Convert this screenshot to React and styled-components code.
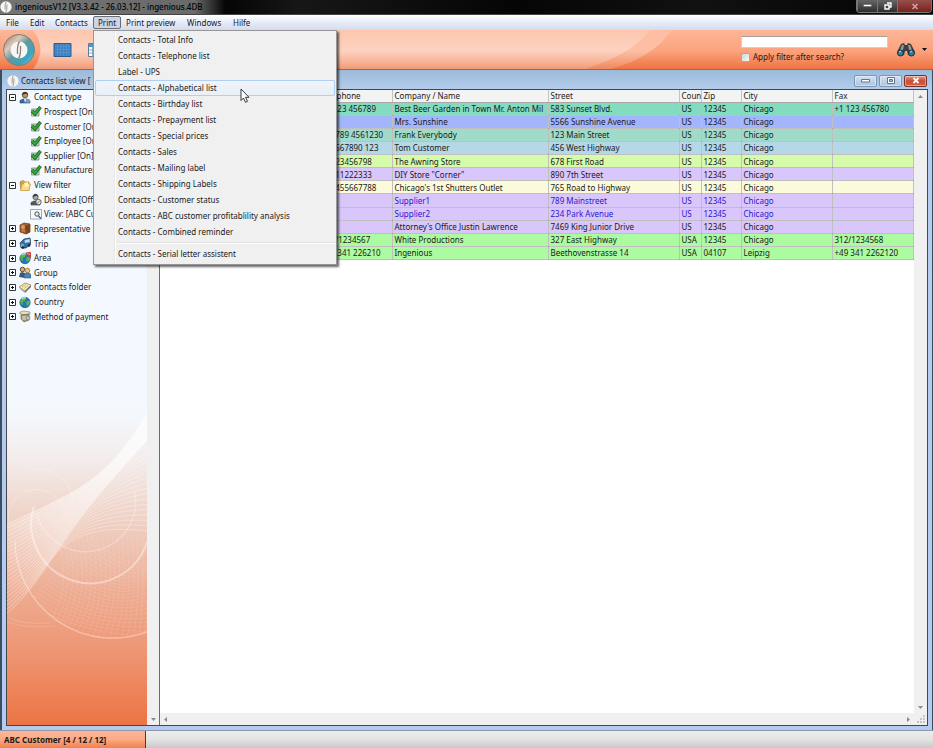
import React from 'react';
import styled, { createGlobalStyle } from 'styled-components';

const GlobalStyle = createGlobalStyle`
  * {
    box-sizing: border-box;
  }

  body {
    margin: 0;
    color: #1a1a1a;
    font: 8px/12px 'Noto Sans', 'Open Sans', sans-serif;
  }

  button, input {
    margin: 0;
    padding: 0;
    color: inherit;
    font: inherit;
  }

  ul {
    margin: 0;
    padding: 0;
    list-style: none;
  }
`;

const Page = styled.div`
  min-height: 100vh;
  display: flex;
  flex-direction: column;
  background-color: #a9c4e4;
`;

const TitleBar = styled.header`
  height: 15px;
  display: flex;
  align-items: center;
  gap: 3px;
  background: linear-gradient(90deg, #747474 0, #6a6a6a 195px, #060606 225px, #060606 230px, #171717 300px, #050505 55%, #111 75%, #030303);
  border-bottom: 1px solid #444;
`;

const AppTitle = styled.h1`
  flex: 1;
  margin: 0;
  color: #000;
  font-size: 8px;
  font-weight: 500;
`;

const WindowButtons = styled.div`
  align-self: flex-start;
  display: flex;
  margin-right: 1px;
  border: 1px solid #777;
  border-top: 0;
  border-radius: 0 0 4px 4px;
  overflow: hidden;
`;

const WindowButton = styled.button`
  width: ${(p) => (p.$close ? '34px' : '20px')};
  height: 12px;
  display: flex;
  align-items: center;
  justify-content: center;
  border: 0;
  border-left: 1px solid #777;
  background: ${(p) => (p.$close ? 'linear-gradient(#96504b, #7b211b)' : 'linear-gradient(#666, #2d2d2d)')};
`;

const MenuBar = styled.nav`
  position: relative;
  z-index: 2;
  height: 15px;
  display: flex;
  align-items: center;
  padding-left: 1px;
  background: linear-gradient(#fff, #e8edf8 45%, #d4dbee);
`;

const MenuButton = styled.button`
  height: 13px;
  padding: 0 4px;
  border: 1px solid ${(p) => (p.$open ? '#6a6d75' : 'transparent')};
  border-radius: 2px;
  background: ${(p) => (p.$open ? '#cfd4e2' : 'none')};
  line-height: 10px;
  white-space: nowrap;
`;

const MenuItemHolder = styled.div`
  position: relative;
  flex: 0 0 ${(p) => p.$width}px;
  display: flex;
`;

const DropDown = styled.div`
  position: absolute;
  top: 14px;
  left: 0;
  width: 244px;
  padding: 1px 1px 2px;
  border: 1px solid #979797;
  background:
    linear-gradient(90deg, transparent 20px, #e6e7e7 20px, #e6e7e7 21px, #fff 21px, #fff 22px, transparent 22px),
    #f0f0f0;
  box-shadow: 2px 2px 2px #0009;
`;

const DropItem = styled.button`
  width: 100%;
  height: 16px;
  display: block;
  padding: 0 0 0 22px;
  border: 1px solid ${(p) => (p.$active ? '#aecff7' : 'transparent')};
  border-radius: 2px;
  background: ${(p) => (p.$active ? 'linear-gradient(#f2f6fbcc, #e6eff9cc)' : 'none')};
  line-height: 14px;
  text-align: left;
`;

const DropRule = styled.hr`
  height: 2px;
  margin: 2px 0 2px 22px;
  border: 0;
  border-top: 1px solid #e0e0e0;
  background-color: #fff;
`;

const Pointer = styled.svg`
  position: absolute;
  top: 57px;
  left: 146px;
  width: 10px;
  height: 15px;
`;

const ToolBar = styled.div`
  position: relative;
  height: 40px;
  display: flex;
  align-items: center;
  background: linear-gradient(#fdb697, #fba27c 55%, #ee7341);
  border-bottom: 1px solid #8d6d63;
`;

const Sweep = styled.svg`
  position: absolute;
  top: 0;
  left: 0;
  width: 100%;
  height: 100%;
`;

const Tools = styled.div`
  position: relative;
  flex: 1;
  display: flex;
  align-items: center;
  gap: 12px;
  padding-left: 2px;
`;

const ToolButton = styled.button`
  height: 34px;
  display: flex;
  align-items: center;
  border: 0;
  background: none;
`;

const Search = styled.form`
  position: relative;
  width: 147px;
  display: flex;
  flex-direction: column;
  gap: 3px;
`;

const SearchInput = styled.input`
  width: 100%;
  height: 12px;
  padding: 0 2px;
  border: 1px solid #e3c9bd;
  border-top-color: #a5a09e;
  background-color: #fff;
`;

const CheckLabel = styled.label`
  display: flex;
  align-items: center;
  gap: 3px;
  white-space: nowrap;
`;

const CheckBox = styled.input`
  width: 9px;
  height: 9px;
  appearance: none;
  border: 1px solid #b5a49c;
  background: linear-gradient(135deg, #cfd5dc, #f7f7f7);
`;

const FindButtons = styled.div`
  position: relative;
  display: flex;
  align-items: center;
  gap: 6px;
  padding: 0 6px 0 8px;
`;

const MdiWindow = styled.main`
  flex: 1;
  display: flex;
  flex-direction: column;
  padding: 0 4px 4px;
  border: solid #3b4d61;
  border-width: 0 1px 0 2px;
  background: linear-gradient(#9bbad9, #b5cdec 20px, #b4caf0);
`;

const MdiTitle = styled.div`
  height: 19px;
  display: flex;
  align-items: center;
  gap: 2px;
  padding: 2px 1px 0;
`;

const MdiName = styled.h2`
  flex: 1;
  margin: 0;
  font-size: 8px;
  font-weight: 400;
`;

const MdiButton = styled.button`
  width: 23px;
  height: 12px;
  display: flex;
  align-items: center;
  justify-content: center;
  border: 1px solid ${(p) => (p.$close ? '#72342d' : '#7f96b2')};
  border-radius: 2px;
  background: ${(p) => (p.$close ? 'linear-gradient(#e69a88, #cf4a32 50%, #d5624c)' : 'linear-gradient(#cfe0f3, #adc6e2)')};
  box-shadow: inset 0 0 0 1px #fff6;
`;

const MdiBody = styled.div`
  flex: 1;
  display: grid;
  grid-template-columns: 153px 1fr;
  border: 1px solid #43484f;
`;

const SideBar = styled.aside`
  display: grid;
  grid-template-columns: 1fr 12px;
  border-right: 1px solid #6c6c6c;
`;

const SidePanel = styled.div`
  display: flex;
  flex-direction: column;
  justify-content: space-between;
  padding-bottom: 84px;
  background: linear-gradient(#f4f9ff 50%, #f3edec 58%, #efcdbf 69%, #eeac92 79%, #ee9775 88%, #ec7444);
`;

const Tree = styled.ul`
  height: 234px;
  display: flex;
  flex-direction: column;
`;

const TreeRow = styled.li`
  flex: 1;
  display: flex;
  align-items: center;
  gap: ${(p) => (p.$child ? '2px' : '3px')};
  padding-left: ${(p) => (p.$child ? '23px' : '2px')};
  white-space: nowrap;
  overflow: hidden;
`;

const Expander = styled.button`
  width: 7px;
  height: 7px;
  display: flex;
  border: 0;
  background: none;
`;

const ScrollTrack = styled.div`
  display: flex;
  flex-direction: ${(p) => (p.$across ? 'row' : 'column')};
  justify-content: ${(p) => (p.$end ? 'flex-end' : 'space-between')};
  align-items: center;
  padding: ${(p) => (p.$across ? '0 3px' : '4px 0 3px')};
  background-color: #f0f0f0;
`;

const ListArea = styled.div`
  min-width: 0;
  display: grid;
  grid-template: 1fr 12px / 1fr 13px;
  background-color: #fff;
`;

const ContactTable = styled.table`
  width: 100%;
  height: 170px;
  align-self: start;
  table-layout: fixed;
  border-collapse: collapse;
`;

const Col = styled.col`
  width: ${(p) => p.$width};
`;

const Th = styled.th`
  height: 12px;
  padding: 0 0 0 2px;
  border-right: 1px solid #c4c4c4;
  border-bottom: 1px solid #a9a9a9;
  background-color: #f3f3f3;
  font-weight: 400;
  line-height: 11px;
  text-align: left;
  white-space: nowrap;
  overflow: hidden;
`;

const Row = styled.tr`
  color: ${(p) => (p.$link ? '#2a16d0' : '#1a1a1a')};
  background-color: ${(p) => p.$tint};
`;

const Td = styled.td`
  height: 13px;
  padding: 0 0 0 2px;
  border-right: 1px solid #8888;
  border-bottom: 1px solid #8888;
  line-height: 11px;
  white-space: nowrap;
  overflow: hidden;
`;

const Grip = styled.svg`
  width: 13px;
  height: 12px;
  background-color: #f0f0f0;
`;

const StatusBar = styled.footer`
  height: 18px;
  display: flex;
  border-top: 1px solid #8d99a8;
  background: linear-gradient(#ededed, #e3e3e3 50%, #c9c9c9);
`;

const StatusText = styled.div`
  width: 146px;
  padding: 3px 4px;
  border-right: 1px solid #4c3b35;
  background: linear-gradient(#fdb697, #fca985 50%, #f0804f);
  font-weight: 700;
  line-height: 12px;
`;

const menus = [
  ['File', 24], ['Edit', 25], ['Contacts', 43], ['Print', 28], ['Print preview', 61], ['Windows', 46], ['Hilfe', 30],
];

const printItems = [
  'Contacts - Total Info',
  'Contacts - Telephone list',
  'Label - UPS',
  'Contacts - Alphabetical list',
  'Contacts - Birthday list',
  'Contacts - Prepayment list',
  'Contacts - Special prices',
  'Contacts - Sales',
  'Contacts - Mailing label',
  'Contacts - Shipping Labels',
  'Contacts - Customer status',
  'Contacts - ABC customer profitablility analysis',
  'Contacts - Combined reminder',
];

const tree = [
  { label: 'Contact type', icon: 'person', open: true },
  { label: 'Prospect [On]', icon: 'check', child: true },
  { label: 'Customer [On]', icon: 'check', child: true },
  { label: 'Employee [On]', icon: 'check', child: true },
  { label: 'Supplier [On]', icon: 'check', child: true },
  { label: 'Manufacturer', icon: 'check', child: true },
  { label: 'View filter', icon: 'folder', open: true },
  { label: 'Disabled [Off]', icon: 'disabled', child: true },
  { label: 'View: [ABC Cu', icon: 'view', child: true },
  { label: 'Representative', icon: 'representative' },
  { label: 'Trip', icon: 'trip' },
  { label: 'Area', icon: 'area' },
  { label: 'Group', icon: 'group' },
  { label: 'Contacts folder', icon: 'contacts' },
  { label: 'Country', icon: 'country' },
  { label: 'Method of payment', icon: 'payment' },
];

const columns = [
  ['', '159px'], ['Telephone', '73px'], ['Company / Name', '156px'], ['Street', '131px'],
  ['Country', '22px'], ['Zip', '40px'], ['City', '91px'], ['Fax', 'auto'],
];

const contacts = [
  { tint: '#83dcc0', cells: ['+1 123 456789', 'Best Beer Garden in Town Mr. Anton Mil', '583 Sunset Blvd.', 'US', '12345', 'Chicago', '+1 123 456780'] },
  { tint: '#a3b5fc', cells: ['', 'Mrs. Sunshine', '5566 Sunshine Avenue', 'US', '12345', 'Chicago', ''] },
  { tint: '#a0dbc9', cells: ['456789 4561230', 'Frank Everybody', '123 Main Street', 'US', '12345', 'Chicago', ''] },
  { tint: '#b5d8e8', cells: ['234567890 123', 'Tom Customer', '456 West Highway', 'US', '12345', 'Chicago', ''] },
  { tint: '#d6fcab', cells: ['00123456798', 'The Awning Store', '678 First Road', 'US', '12345', 'Chicago', ''] },
  { tint: '#d9c6fb', cells: ['00111222333', 'DIY Store "Corner"', '890 7th Street', 'US', '12345', 'Chicago', ''] },
  { tint: '#fbfada', cells: ['334455667788', "Chicago's 1st Shutters Outlet", '765 Road to Highway', 'US', '12345', 'Chicago', ''] },
  { tint: '#d9c6fb', link: true, cells: ['', 'Supplier1', '789 Mainstreet', 'US', '12345', 'Chicago', ''] },
  { tint: '#d9c6fb', link: true, cells: ['', 'Supplier2', '234 Park Avenue', 'US', '12345', 'Chicago', ''] },
  { tint: '#d9c6fb', cells: ['', "Attorney's Office Justin Lawrence", '7469 King Junior Drive', 'US', '12345', 'Chicago', ''] },
  { tint: '#adfba0', cells: ['312/1234567', 'White Productions', '327 East Highway', 'USA', '12345', 'Chicago', '312/1234568'] },
  { tint: '#adfba0', cells: ['+49 341 226210', 'Ingenious', 'Beethovenstrasse 14', 'USA', '04107', 'Leipzig', '+49 341 2262120'] },
];

function Logo({ size, ring }) {
  return (
    <svg width={size} height={size} viewBox="0 0 34 34" aria-hidden="true">
      <defs>
        <linearGradient id="ring" x1="0" y1="0" x2="1" y2="1">
          <stop offset="0" stopColor="#8c6f62" />
          <stop offset="0.3" stopColor="#dfc8b8" />
          <stop offset="0.5" stopColor="#5f9a9f" />
          <stop offset="0.75" stopColor="#3aa5c0" />
          <stop offset="1" stopColor="#8ad4da" />
        </linearGradient>
      </defs>
      {ring && <circle cx="17" cy="17" r="15.5" fill="url(#ring)" stroke="#7a7f80" />}
      <circle cx="17" cy="17" r={ring ? 8.5 : 16} fill="#f6f6f4" />
      <g transform={ring ? undefined : 'translate(-13.6 -13.6) scale(1.8)'} stroke="#8c8377" strokeWidth="1.3" fill="none">
        <path d="M17.500 8.500Q15 12 15.500 21M16.500 25.500Q19 22 18.500 13" />
      </g>
    </svg>
  );
}

const globe = (
  <>
    <circle cx="6" cy="6.500" r="5.200" fill="#2377b8" stroke="#174d75" strokeWidth="0.6" />
    <path d="M2 3c2-2 4-2 5-1L6 5 3.500 6 4 9l-2-1C1 6 1 4 2 3zM8 5l3 0c0 3-1 4-3 5L7 7z" fill="#5cb544" />
    <path d="M3 3q2-2 4-1" stroke="#c9ecff" fill="none" />
  </>
);

const icons = {
  person: (
    <>
      <path d="M1 12V9.500L4 8h4l3 1.500V12z" fill="#3a6da0" stroke="#29435c" strokeWidth="0.600" />
      <path d="M5 8l1 4 1.500-4z" fill="#e6edf2" />
      <circle cx="6" cy="4" r="2.800" fill="#bd9565" stroke="#4c3a28" strokeWidth="0.700" />
      <path d="M3 4c0-4 6-4 6 0L7 2.500z" fill="#3e3022" />
      <circle cx="9" cy="10" r="2" fill="#7e9db2" />
    </>
  ),
  check: (
    <>
      <path d="M1.500 4h7.500v7H1.500z" fill="#b9ccb9" stroke="#7d917d" strokeWidth="0.8" />
      <path d="M2 6L5 9 10.500 2" fill="none" stroke="#16611b" strokeWidth="3.400" />
      <path d="M2 6L5 8.800 10.500 2" fill="none" stroke="#37a83b" strokeWidth="1.900" />
    </>
  ),
  folder: (
    <>
      <path d="M1 3l3-1.500L6 3h4v8H2z" fill="#d9a43b" stroke="#a3752a" strokeWidth="0.700" />
      <path d="M3 5h8.500L10 11.500H1.500z" fill="#fbdc84" stroke="#b98b31" strokeWidth="0.600" />
      <path d="M5 4l4-1 1 4-4 1z" fill="#fff3c8" />
    </>
  ),
  disabled: (
    <>
      <path d="M1 12V9.500L4 8h4l2 1.500V12z" fill="#5a5a5a" stroke="#333" strokeWidth="0.600" />
      <circle cx="5.500" cy="4" r="2.700" fill="#a8a8a8" stroke="#444" strokeWidth="0.700" />
      <path d="M3 4c0-4 5-4 5 0L7 2.500z" fill="#383838" />
      <circle cx="8.500" cy="9" r="2.700" fill="#eee" stroke="#444" strokeWidth="0.8" />
      <path d="M7 10.500l3-3" stroke="#444" strokeWidth="0.8" />
    </>
  ),
  view: (
    <>
      <path d="M0.500 1.500h11v9.500h-11z" fill="#f7f9f9" stroke="#8d9699" strokeWidth="0.8" />
      <circle cx="7" cy="6" r="2.200" fill="#d9f0f6" stroke="#3f5962" />
      <path d="M8.500 8l2.500 2.500" stroke="#3f5962" strokeWidth="1.300" />
    </>
  ),
  representative: (
    <>
      <path d="M1 3l4-2 6 1v8l-4 2-6-2z" fill="#a4602f" stroke="#5e3418" strokeWidth="0.700" />
      <path d="M6 4l5-2v8l-4 2z" fill="#7d431d" />
      <circle cx="4" cy="5" r="2" fill="#d99a64" />
      <path d="M2 9l2-2 2 1v2z" fill="#c87f42" />
    </>
  ),
  trip: (
    <>
      <path d="M1 6l4-4 6-1 1 6-5 4H2z" fill="#336fa5" stroke="#1d3448" strokeWidth="0.700" />
      <path d="M5.500 3l5-1 .500 3-5 1z" fill="#b9def2" />
      <path d="M1.500 6.500L5 7v3H2z" fill="#64a9d6" />
      <circle cx="4" cy="10.500" r="1.300" fill="#222" />
      <circle cx="10" cy="8.500" r="1.300" fill="#222" />
    </>
  ),
  area: (
    <>
      {globe}
      <path d="M7 1l4.500-.500V6z" fill="#d63a33" stroke="#d63a33" />
      <path d="M8 1.500l3 1" stroke="#fff" strokeWidth="0.6" />
    </>
  ),
  group: (
    <>
      <path d="M0 11l1-4 2-1 3 1v5z" fill="#3f5873" />
      <path d="M5 12V8.500L7 7h3l2 1.500V12z" fill="#4b83b8" stroke="#2c4a66" strokeWidth="0.500" />
      <circle cx="3.500" cy="3.500" r="2.300" fill="#cfa67a" stroke="#423222" strokeWidth="0.800" />
      <circle cx="8.500" cy="4.500" r="2.300" fill="#eac697" stroke="#8d6c2a" strokeWidth="0.800" />
      <path d="M6 4c0-3 5-3 5 0L8.500 3z" fill="#caa03d" />
    </>
  ),
  contacts: (
    <>
      <path d="M0 6l6-4 6 2-6 6z" fill="#f4e9b8" stroke="#867b52" strokeWidth="0.700" />
      <path d="M0 6l6 4v2L1 8z" fill="#a4a7a2" />
      <path d="M6 10l6-6v2l-6 6z" fill="#6f7577" />
      <path d="M3 6l4-2.500M5 7.500l4-3" stroke="#c1ab63" strokeWidth="0.8" />
    </>
  ),
  country: globe,
  payment: (
    <>
      <path d="M1 2l4-1 6 1v2L6 5 1 4z" fill="#e4dfc6" stroke="#7d7a62" strokeWidth="0.600" />
      <path d="M2 5l8-1v6l-5 2-3-3z" fill="#a39b72" stroke="#5d5940" strokeWidth="0.600" />
      <path d="M3 7h5M3.500 9h4" stroke="#efe9cd" />
      <circle cx="9" cy="8" r="2" fill="#bfc7c4" stroke="#5f6b68" strokeWidth="0.600" />
    </>
  ),
};

function TreeIcon({ name }) {
  return <svg width="12" height="13" viewBox="0 0 12 13" aria-hidden="true">{icons[name]}</svg>;
}

function Arrow({ dir }) {
  const paths = { up: 'M0 4l2.500-3L5 4z', down: 'M0 1l2.500 3L5 1z', left: 'M4 0L1 2.500 4 5z', right: 'M1 0l3 2.500L1 5z' };
  return <svg width="5" height="5" aria-hidden="true"><path d={paths[dir]} fill="#8a8a8a" /></svg>;
}

// ribbon of fine curves and rings on the lower part of the side panel
function Waves() {
  const mix = (a, b, t) => Math.round((a + (b - a) * t) * 10) / 10;
  const ribbon = [];
  for (let i = 0; i <= 22; i += 1) {
    const t = i / 22;
    ribbon.push(`M140 ${mix(3, 120, t)}C${mix(98, 38, t)} ${mix(72, 108, t)} ${mix(70, 46, t)} ${mix(80, 165, t)} 0 ${mix(113, 202, t)}`);
  }
  const mesh = [];
  for (let i = 0; i < 22; i += 1) {
    mesh.push(`M${20 + i * 3} ${190 - i * 3}Q${70 + i * 4} ${225 - i * 2} ${150} ${225 - i * 5}`);
    mesh.push(`M${50 + i * 5} 125Q${70 + i * 4} 185 ${30 + i * 6} 228`);
  }
  return (
    <svg width="140" height="230" viewBox="0 0 140 230" fill="none" stroke="#fff" aria-hidden="true">
      <defs>
        <linearGradient id="band" x1="1" y1="0" x2="0" y2="1">
          <stop offset="0" stopColor="#fff" stopOpacity="0.7" />
          <stop offset="0.6" stopColor="#fff" stopOpacity="0.35" />
          <stop offset="1" stopColor="#fff" stopOpacity="0" />
        </linearGradient>
        <clipPath id="disc"><circle cx="106" cy="129" r="98" /></clipPath>
      </defs>
      <path d="M140 3C98 72 70 80 0 113L0 202C46 165 38 138 140 30z" fill="url(#band)" stroke="none" />
      <path d={ribbon.join('')} strokeWidth="0.8" strokeOpacity="0.4" />
      <path d={mesh.join('')} clipPath="url(#disc)" strokeWidth="0.6" strokeOpacity="0.18" />
      <path d="M8 130A98 98 0 0 0 140 221" strokeOpacity="0.35" strokeWidth="1.5" />
      <path d="M27 95A59 59 0 0 0 140 131" strokeOpacity="0.4" strokeWidth="2" />
      <path d="M30 103A50 50 0 1 0 127 78" strokeOpacity="0.25" strokeWidth="1.5" />
      <path d="M2 112A28 28 0 0 1 55 95M22 60A34 34 0 0 1 66 90" strokeOpacity="0.25" />
      <path d="M0 206Q15 214 42 212M0 211Q20 218 48 215" strokeOpacity="0.15" />
    </svg>
  );
}

function PrintMenu() {
  return (
    <DropDown>
      {printItems.map((item) => (
        <DropItem key={item} $active={item.includes('Alphabetical')}>{item}</DropItem>
      ))}
      <DropRule />
      <DropItem>Contacts - Serial letter assistent</DropItem>
      <Pointer viewBox="0 0 10 15" aria-hidden="true">
        <path d="M1 1v11.500l2.500-2.500 2 4.300 2-1-2-4h3.500z" fill="#fff" stroke="#222" strokeWidth="0.9" />
      </Pointer>
    </DropDown>
  );
}

function MainToolBar() {
  return (
    <ToolBar>
      <Sweep viewBox="0 0 933 40" preserveAspectRatio="none" aria-hidden="true">
        <defs>
          <linearGradient id="sweep" x1="0" y1="0" x2="0" y2="1">
            <stop offset="0" stopColor="#fff" stopOpacity="0.12" />
            <stop offset="0.5" stopColor="#fff" stopOpacity="0.3" />
            <stop offset="1" stopColor="#fff" stopOpacity="0.15" />
          </linearGradient>
        </defs>
        <path d="M33 0Q48 20 33 40H611Q653 28 672 0z" fill="url(#sweep)" />
        <path d="M33 0Q48 20 33 40H585Q630 26 650 0z" fill="url(#sweep)" />
      </Sweep>
      <Tools>
        <ToolButton aria-label="Start"><Logo size={34} ring /></ToolButton>
        <ToolButton aria-label="List">
          <svg width="28" height="16" viewBox="0 0 28 16">
            <path d="M6 1.500h17v13H6z" fill="#3d83c4" stroke="#2c5d92" />
            <path d="M7 4.500h15M7 7.500h15M7 10.500h15M9.500 2v12M12.500 2v12M15.500 2v12M18.500 2v12M21 2v12" stroke="#5f9bd2" strokeWidth="0.500" />
          </svg>
        </ToolButton>
        <ToolButton aria-label="Form">
          <svg width="18" height="16" viewBox="0 0 18 16">
            <path d="M0.500 1.500h17v13H0.500z" fill="#fff" stroke="#587c99" />
            <path d="M1 2h16v3H1z" fill="#4f95c9" />
            <path d="M1 8h16M1 11h16M4.500 5v9M9 5v9M13 5v9" stroke="#86a9c3" />
          </svg>
        </ToolButton>
      </Tools>
      <Search>
        <SearchInput type="text" aria-label="Search" />
        <CheckLabel>
          <CheckBox type="checkbox" />
          Apply filter after search?
        </CheckLabel>
      </Search>
      <FindButtons>
        <ToolButton aria-label="Find">
          <svg width="20" height="16" viewBox="0 0 20 16">
            <path d="M5 2l3-1 1 2h2l1-2 3 1 4 8-3 4-4-1-1-4H9l-1 4-4 1-3-4z" fill="#3a4144" />
            <path d="M6 3l2 0-1 5-3 0zM14 3l-2 0 1 5 3 0z" fill="#919b91" />
            <circle cx="4.500" cy="11" r="3" fill="#3b7b9c" stroke="#1b2b34" />
            <circle cx="15.500" cy="11" r="3" fill="#3b7b9c" stroke="#1b2b34" />
            <path d="M3 10l2-1M14 10l2-1" stroke="#b8e3f2" />
          </svg>
        </ToolButton>
        <ToolButton aria-label="Find options">
          <svg width="5" height="4"><path d="M0 0h5L2.500 3z" fill="#111" /></svg>
        </ToolButton>
      </FindButtons>
    </ToolBar>
  );
}

function FilterTree() {
  return (
    <Tree>
      {tree.map(({ label, icon, child, open }) => (
        <TreeRow key={label} $child={child}>
          {!child && (
            <Expander aria-label={label}>
              <svg width="7" height="7">
                <path d="M0.500 0.500h6v6h-6z" fill="#fff" stroke="#333" />
                <path d={open ? 'M2 3.500h3' : 'M2 3.500h3M3.500 2v3'} stroke="#111" />
              </svg>
            </Expander>
          )}
          <TreeIcon name={icon} />
          {label}
        </TreeRow>
      ))}
    </Tree>
  );
}

function ContactList() {
  return (
    <ContactTable>
      <colgroup>
        {columns.map(([name, width]) => <Col key={name} $width={width} />)}
      </colgroup>
      <thead>
        <tr>{columns.map(([name]) => <Th key={name}>{name === 'Country' ? 'Coun' : name}</Th>)}</tr>
      </thead>
      <tbody>
        {contacts.map(({ tint, link, cells }) => (
          <Row key={cells[1]} $tint={tint} $link={link}>
            <Td />
            {cells.map((cell, i) => <Td key={columns[i + 1][0]}>{cell}</Td>)}
          </Row>
        ))}
      </tbody>
    </ContactTable>
  );
}

export default function App() {
  return (
    <Page>
      <GlobalStyle />
      <TitleBar>
        <Logo size={12} />
        <AppTitle>ingeniousV12 [V3.3.42 - 26.03.12] - ingenious.4DB</AppTitle>
        <WindowButtons>
          <WindowButton aria-label="Minimize">
            <svg width="9" height="4"><path d="M0.500 0.500h8v2h-8z" fill="#fff" stroke="#555" strokeWidth="0.500" /></svg>
          </WindowButton>
          <WindowButton aria-label="Restore">
            <svg width="8" height="8"><path d="M3 1h4v4H5M1 3h4v4H1z" fill="none" stroke="#fff" strokeWidth="1.400" /></svg>
          </WindowButton>
          <WindowButton $close aria-label="Close">
            <svg width="8" height="7"><path d="M1.500 1l5 5M6.500 1l-5 5" stroke="#c9a3a0" strokeWidth="1.600" /></svg>
          </WindowButton>
        </WindowButtons>
      </TitleBar>
      <MenuBar>
        {menus.map(([name, width]) => (
          <MenuItemHolder key={name} $width={width}>
            <MenuButton $open={name === 'Print'}>{name}</MenuButton>
            {name === 'Print' && <PrintMenu />}
          </MenuItemHolder>
        ))}
      </MenuBar>
      <MainToolBar />
      <MdiWindow>
        <MdiTitle>
          <Logo size={12} />
          <MdiName>Contacts list view [</MdiName>
          <MdiButton aria-label="Minimize list">
            <svg width="9" height="4"><path d="M0.500 0.500h8v2.500h-8z" fill="#fff" stroke="#64748a" /></svg>
          </MdiButton>
          <MdiButton aria-label="Maximize list">
            <svg width="8" height="7"><path d="M0.500 0.500h7v6h-7z" fill="#fff" stroke="#64748a" /><path d="M2.500 2.500h3v2h-3z" fill="#a9c0dc" stroke="#64748a" /></svg>
          </MdiButton>
          <MdiButton $close aria-label="Close list">
            <svg width="8" height="7"><path d="M1.500 1l5 5M6.500 1l-5 5" stroke="#fff" strokeWidth="1.800" /></svg>
          </MdiButton>
        </MdiTitle>
        <MdiBody>
          <SideBar>
            <SidePanel>
              <FilterTree />
              <Waves />
            </SidePanel>
            <ScrollTrack $end><Arrow dir="down" /></ScrollTrack>
          </SideBar>
          <ListArea>
            <ContactList />
            <ScrollTrack><Arrow dir="up" /><Arrow dir="down" /></ScrollTrack>
            <ScrollTrack $across><Arrow dir="left" /><Arrow dir="right" /></ScrollTrack>
            <Grip aria-hidden="true">
              <path d="M9 3h2M6 6h2M9 6h2M3 9h2M6 9h2M9 9h2" stroke="#b5b5b5" strokeWidth="1.500" />
            </Grip>
          </ListArea>
        </MdiBody>
      </MdiWindow>
      <StatusBar>
        <StatusText>ABC Customer [4 / 12 / 12]</StatusText>
      </StatusBar>
    </Page>
  );
}
